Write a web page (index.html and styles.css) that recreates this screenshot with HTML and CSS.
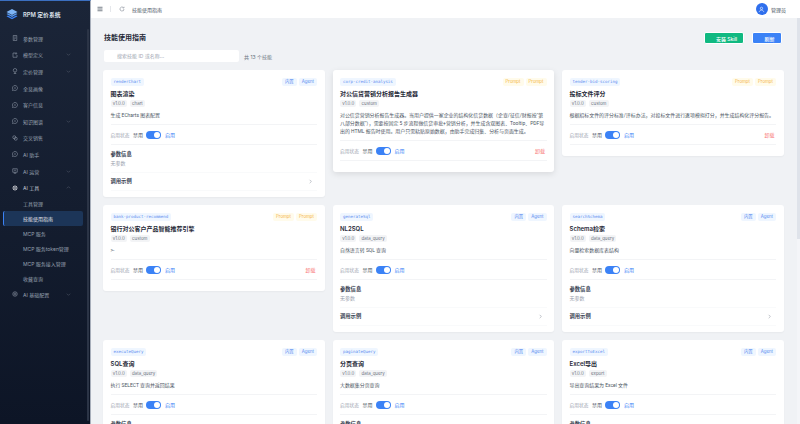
FILE: index.html
```html
<!DOCTYPE html>
<html lang="zh">
<head>
<meta charset="utf-8">
<title>技能使用指南</title>
<link rel="stylesheet" href="styles.css">
</head>
<body>
<div class="app">
  <aside class="sidebar">
    <i class="side-scroll"></i>
    <div class="brand">
      <svg class="logo" viewBox="0 0 24 24"><path d="M12 2 23 8 12 14 1 8Z" fill="#7db4f5"/><path d="M1 12l11 6 11-6-3-1.600-8 4.400-8-4.400Z" fill="#5a9bf0"/><path d="M1 16.500l11 6 11-6-3-1.600-8 4.400-8-4.400Z" fill="#3b82f6"/></svg>
      <span class="brand-name">RPM 定价系统</span>
    </div>
    <nav class="menu">
      <a class="item"><svg class="ic" viewBox="0 0 24 24"><path d="M5 2h14v20H5zM9 8h6M9 13h6M9 17h3"/></svg><span>参数管理</span></a>
      <a class="item"><svg class="ic" viewBox="0 0 24 24"><path d="M12 4H4v17h16v-9M16 3a3 3 0 1 0 .01 0"/></svg><span>模型定义</span><svg class="caret" viewBox="0 0 24 24"><path d="M4 8l8 8 8-8"/></svg></a>
      <a class="item"><svg class="ic" viewBox="0 0 24 24"><circle cx="12" cy="9" r="7"/><path d="M12 16v6M7 22h10"/></svg><span>定价管理</span><svg class="caret" viewBox="0 0 24 24"><path d="M4 8l8 8 8-8"/></svg></a>
      <a class="item"><svg class="ic" viewBox="0 0 24 24"><path d="M12 2a10 10 0 1 1-5 18.700L2 22l1.300-5A10 10 0 0 1 12 2ZM8 12h8"/></svg><span>全息画像</span></a>
      <a class="item"><svg class="ic" viewBox="0 0 24 24"><path d="M12 2a10 10 0 1 1-5 18.700L2 22l1.300-5A10 10 0 0 1 12 2ZM8 12h8"/></svg><span>客户信息</span></a>
      <a class="item"><svg class="ic" viewBox="0 0 24 24"><path d="M12 2a10 10 0 1 1-5 18.700L2 22l1.300-5A10 10 0 0 1 12 2ZM8 12h8"/></svg><span>知识图谱</span><svg class="caret" viewBox="0 0 24 24"><path d="M4 8l8 8 8-8"/></svg></a>
      <a class="item"><svg class="ic" viewBox="0 0 24 24"><circle cx="9" cy="9" r="6"/><circle cx="15" cy="15" r="6"/></svg><span>交叉销售</span></a>
      <a class="item"><svg class="ic" viewBox="0 0 24 24"><path d="M12 2a10 10 0 1 1-5 18.700L2 22l1.300-5A10 10 0 0 1 12 2ZM8 12h8"/></svg><span>AI 助手</span></a>
      <a class="item"><svg class="ic" viewBox="0 0 24 24"><path d="M3 3h18v14H3zM12 17v4M7 21h10M8 9h8"/></svg><span>AI 运营</span><svg class="caret" viewBox="0 0 24 24"><path d="M4 8l8 8 8-8"/></svg></a>
      <a class="item open"><svg class="ic" viewBox="0 0 24 24"><circle cx="12" cy="12" r="5"/><path d="M12 1v5M12 18v5M1 12h5M18 12h5M4 4l4 4M16 16l4 4M20 4l-4 4M8 16l-4 4"/></svg><span>AI 工具</span><svg class="caret" viewBox="0 0 24 24"><path d="M4 16l8-8 8 8"/></svg></a>
      <a class="sub">工具管理</a>
      <a class="sub active">技能使用指南</a>
      <a class="sub">MCP 服务</a>
      <a class="sub">MCP 服务token管理</a>
      <a class="sub">MCP 服务接入管理</a>
      <a class="sub">收藏查询</a>
      <a class="item"><svg class="ic" viewBox="0 0 24 24"><circle cx="12" cy="12" r="4"/><circle cx="12" cy="12" r="9"/></svg><span>AI 基础配置</span><svg class="caret" viewBox="0 0 24 24"><path d="M4 8l8 8 8-8"/></svg></a>
    </nav>
  </aside>
  <div class="content">
    <header class="topbar">
      <svg class="tool menu-btn" viewBox="0 0 24 24"><path d="M2 5h20M2 12h20M2 19h20"/></svg>
      <i class="sep"></i>
      <svg class="tool" viewBox="0 0 24 24"><path d="M20 12a8 8 0 1 1-3-6.200M20 3v5h-5"/></svg>
      <span class="crumb">技能使用指南</span>
      <span class="user"><span class="avatar"><svg viewBox="0 0 24 24"><circle cx="12" cy="8" r="4"/><path d="M4 21c1-5 4-7 8-7s7 2 8 7"/></svg></span><span>管理员</span></span>
    </header>
    <div class="body-row">
      <main class="page">
        <div class="page-head">
          <h1>技能使用指南</h1>
          <div class="actions">
            <button class="btn green">安装 Skill</button>
            <button class="btn blue">刷新</button>
          </div>
        </div>
        <div class="search-row">
          <div class="search">搜索技能 ID 或名称...</div>
          <span class="count">共 13 个技能</span>
        </div>
        <div class="grid">
          <section class="card">
            <div class="card-top"><code class="id">renderChart</code><span class="badges"><b>内置</b><b>Agent</b></span></div>
            <h2>图表渲染</h2>
            <div class="meta"><em>v1.0.0</em><em>chart</em></div>
            <p class="desc">生成 ECharts 图表配置</p>
            <div class="state"><span class="lab">启用状态</span><span class="off">禁用</span><i class="switch"></i><span class="on">启用</span></div>
            <div class="params"><h3>参数信息</h3><p>无参数</p></div>
            <div class="example"><h3>调用示例</h3><svg viewBox="0 0 24 24"><path d="M8 4l8 8-8 8"/></svg></div>
          </section>
          <section class="card lifted">
            <div class="card-top"><code class="id">corp-credit-analysis</code><span class="badges prompt"><b>Prompt</b><b>Prompt</b></span></div>
            <h2>对公信贷营销分析报告生成器</h2>
            <div class="meta"><em>v1.0.0</em><em>custom</em></div>
            <p class="desc">对公信贷营销分析报告生成器。当用户提供一家企业的结构化信贷数据（企查/征信/财报按"第八部分数据"），需要按固定 5 步流程做信贷审批+营销分析，并生成含双图表、Tooltip、PDF导出的 HTML 报告时使用。用户只需粘贴原始数据，由助手完成归集、分析与页面生成。</p>
            <div class="state last"><span class="lab">启用状态</span><span class="off">禁用</span><i class="switch"></i><span class="on">启用</span><a class="del">卸载</a></div>
          </section>
          <section class="card">
            <div class="card-top"><code class="id">tender-bid-scoring</code><span class="badges prompt"><b>Prompt</b><b>Prompt</b></span></div>
            <h2>投标文件评分</h2>
            <div class="meta"><em>v1.0.0</em><em>custom</em></div>
            <p class="desc">根据招标文件的评分标准/评标办法，对投标文件进行逐项模拟打分，并生成结构化评分报告。</p>
            <div class="state last"><span class="lab">启用状态</span><span class="off">禁用</span><i class="switch"></i><span class="on">启用</span><a class="del">卸载</a></div>
          </section>
          <section class="card">
            <div class="card-top"><code class="id">bank-product-recommend</code><span class="badges prompt"><b>Prompt</b><b>Prompt</b></span></div>
            <h2>银行对公客户产品智能推荐引擎</h2>
            <div class="meta"><em>v1.0.0</em><em>custom</em></div>
            <p class="desc">&gt;-</p>
            <div class="state last"><span class="lab">启用状态</span><span class="off">禁用</span><i class="switch"></i><span class="on">启用</span><a class="del">卸载</a></div>
          </section>
          <section class="card">
            <div class="card-top"><code class="id">generateSql</code><span class="badges"><b>内置</b><b>Agent</b></span></div>
            <h2>NL2SQL</h2>
            <div class="meta"><em>v1.0.0</em><em>data_query</em></div>
            <p class="desc">自然语言转 SQL 查询</p>
            <div class="state"><span class="lab">启用状态</span><span class="off">禁用</span><i class="switch"></i><span class="on">启用</span></div>
            <div class="params"><h3>参数信息</h3><p>无参数</p></div>
            <div class="example"><h3>调用示例</h3><svg viewBox="0 0 24 24"><path d="M8 4l8 8-8 8"/></svg></div>
          </section>
          <section class="card">
            <div class="card-top"><code class="id">searchSchema</code><span class="badges"><b>内置</b><b>Agent</b></span></div>
            <h2>Schema检索</h2>
            <div class="meta"><em>v1.0.0</em><em>data_query</em></div>
            <p class="desc">向量检索数据库表结构</p>
            <div class="state"><span class="lab">启用状态</span><span class="off">禁用</span><i class="switch"></i><span class="on">启用</span></div>
            <div class="params"><h3>参数信息</h3><p>无参数</p></div>
            <div class="example"><h3>调用示例</h3><svg viewBox="0 0 24 24"><path d="M8 4l8 8-8 8"/></svg></div>
          </section>
          <section class="card">
            <div class="card-top"><code class="id">executeQuery</code><span class="badges"><b>内置</b><b>Agent</b></span></div>
            <h2>SQL查询</h2>
            <div class="meta"><em>v1.0.0</em><em>data_query</em></div>
            <p class="desc">执行 SELECT 查询并返回结果</p>
            <div class="state"><span class="lab">启用状态</span><span class="off">禁用</span><i class="switch"></i><span class="on">启用</span></div>
            <div class="params"><h3>参数信息</h3><p>无参数</p></div>
          </section>
          <section class="card">
            <div class="card-top"><code class="id">paginateQuery</code><span class="badges"><b>内置</b><b>Agent</b></span></div>
            <h2>分页查询</h2>
            <div class="meta"><em>v1.0.0</em><em>data_query</em></div>
            <p class="desc">大数据集分页查询</p>
            <div class="state"><span class="lab">启用状态</span><span class="off">禁用</span><i class="switch"></i><span class="on">启用</span></div>
            <div class="params"><h3>参数信息</h3><p>无参数</p></div>
          </section>
          <section class="card">
            <div class="card-top"><code class="id">exportToExcel</code><span class="badges"><b>内置</b><b>Agent</b></span></div>
            <h2>Excel导出</h2>
            <div class="meta"><em>v1.0.0</em><em>export</em></div>
            <p class="desc">导出查询结果为 Excel 文件</p>
            <div class="state"><span class="lab">启用状态</span><span class="off">禁用</span><i class="switch"></i><span class="on">启用</span></div>
            <div class="params"><h3>参数信息</h3><p>无参数</p></div>
          </section>
        </div>
      </main>
      <div class="scrollbar"><i class="thumb"></i></div>
    </div>
  </div>
</div>
</body>
</html>
```
FILE: styles.css
```css
* { box-sizing: border-box; }
html, body { margin: 0; height: 100%; overflow: hidden; }
body { font-family: Inter, "Noto Sans CJK SC", sans-serif; font-size: 5px; color: #374151; background: #f0f2f5; }
.app { display: flex; height: 424px; }

.sidebar { position: relative; width: 91px; flex: none; background: linear-gradient(180deg, #1b2538 0%, #0d1526 100%); border-right: 1px solid #a8afbb; border-top: 1px solid #3b6fc0; }
.side-scroll { position: absolute; right: 1px; top: 28px; bottom: 3px; width: 2px; background: #2b3446; border-radius: 1px; }
.brand { height: 26px; display: flex; align-items: center; gap: 5px; padding-left: 6px; }
.logo { width: 12px; height: 12px; }
.brand-name { color: #dde2ea; font-size: 5.800px; font-weight: 600; }
.menu { display: flex; flex-direction: column; padding: 3px 7px 0 3px; }
.item { height: 16.600px; flex: none; display: flex; align-items: center; gap: 5px; padding-left: 9px; color: #98a1b0; }
.item.open { color: #c9ced8; }
.item span { flex: 1; }
.ic { width: 6px; height: 6px; fill: none; stroke: #98a1b0; stroke-width: 2.200; }
.open .ic { stroke: #e5e7eb; stroke-width: 3; }
.caret { width: 5px; height: 5px; margin-right: 12px; fill: none; stroke: #6b7280; stroke-width: 2; }
.sub { height: 15px; flex: none; display: flex; align-items: center; padding-left: 20px; color: #98a1b0; }
.sub.active { color: #e5e7eb; background: #1c3558; border-radius: 2px; border-left: 1px solid #3b82f6; padding-left: 19px; }

.content { flex: 1; min-width: 0; display: flex; flex-direction: column; }
.topbar { height: 18px; flex: none; background: #fff; display: flex; align-items: center; padding: 0 14px 0 6px; color: #4b5563; }
.tool { width: 6px; height: 6px; fill: none; stroke: #6b7280; stroke-width: 2; }
.menu-btn { stroke: #4b5563; stroke-width: 3; }
.sep { width: 1px; height: 6px; background: #e5e7eb; margin: 0 8px 0 7px; }
.crumb { margin-left: 7px; }
.user { margin-left: auto; display: flex; align-items: center; gap: 3px; }
.avatar { width: 12px; height: 12px; border-radius: 50%; background: #2f6fed; display: flex; align-items: center; justify-content: center; }
.avatar svg { width: 7px; height: 7px; fill: none; stroke: #fff; stroke-width: 2; }

.body-row { flex: 1; min-height: 0; display: flex; }
.page { flex: 1; min-width: 0; overflow: hidden; padding: 14px 14.500px 0 12px; }
.scrollbar { width: 3.500px; flex: none; background: #f4f5f8; }
.thumb { display: block; height: 221px; background: #dfe3ea; }
.page-head { display: flex; justify-content: space-between; align-items: flex-start; height: 18px; padding-left: 1px; }
h1 { margin: 0; padding-top: 1px; font-size: 7px; line-height: 10px; font-weight: 600; color: #1f2937; }
.actions { display: flex; gap: 8px; }
.btn { height: 12px; border: 1px solid #fff; border-radius: 2px; color: #fff; font: 500 5px Inter, "Noto Sans CJK SC", sans-serif; padding: 0 0 0 5px; }
.green { width: 40px; background: #10b981; }
.blue { width: 30px; background: #3b82f6; }
.search-row { display: flex; align-items: center; gap: 5px; height: 12px; margin-bottom: 8px; padding-left: 1px; }
.search { width: 135px; height: 12px; background: #fff; border-radius: 2px; padding-left: 13px; line-height: 12px; color: #9ca3af; }
.count { color: #6b7280; }
.grid { display: grid; grid-template-columns: repeat(3, 221.500px); column-gap: 8px; row-gap: 8px; align-items: start; }
.card { background: #fff; border-radius: 3px; padding: 8px 7.500px 6px; box-shadow: 0 1px 2px rgba(0, 0, 0, .04); }
.lifted { box-shadow: 0 2px 6px rgba(0, 0, 0, .1); }
.card-top { display: flex; justify-content: space-between; align-items: center; height: 8px; }
.id { font: 4.150px "DejaVu Sans Mono", monospace; color: #5b8def; background: #eff6ff; padding: 0 3px; height: 8px; line-height: 8px; border-radius: 2px; }
.badges { display: flex; gap: 2px; }
.badges b { font-weight: 400; font-size: 4.400px; height: 8px; line-height: 8px; padding: 0 3px; color: #5b8def; background: #eff6ff; border-radius: 2px; }
.prompt b { color: #f5b544; background: #fffbeb; }
h2 { margin: 3px 0 0; font-size: 6px; line-height: 9px; font-weight: 600; color: #1f2937; }
.meta { display: flex; gap: 3px; margin-top: 2px; height: 7px; }
.meta em { font-style: normal; font-size: 4.400px; line-height: 7px; padding: 0 2.200px; color: #6b7280; background: #f3f4f6; border-radius: 2px; }
.desc { margin: 4px 0 0; font-family: Roboto, "Noto Sans CJK SC", sans-serif; font-size: 4.950px; line-height: 8px; color: #4b5563; padding-bottom: 5px; border-bottom: 1px solid #f3f4f6; }
.state { height: 20px; display: flex; align-items: center; gap: 3.500px; border-bottom: 1px solid #f3f4f6; }
.state.last { margin-bottom: 5px; }
.lab { color: #9ca3af; font-size: 4.730px; }
.off { color: #4b5563; }
.on { color: #3b82f6; }
.switch { width: 15px; height: 8px; border-radius: 4px; background: #3b82f6; position: relative; }
.switch::after { content: ""; position: absolute; right: 1px; top: 1px; width: 6px; height: 6px; border-radius: 50%; background: #fff; }
.del { margin-left: auto; margin-right: 1.500px; color: #f87171; }
.params { padding-top: 6px; height: 28px; border-bottom: 1px solid #f9fafb; }
h3 { margin: 0; font-size: 5.300px; line-height: 7px; font-weight: 600; color: #374151; }
.params p { margin: 2px 0 0; color: #9ca3af; line-height: 7px; }
.example { height: 18px; display: flex; justify-content: space-between; align-items: center; border-bottom: 1px solid #f9fafb; padding-right: 4px; }
.example svg { width: 5px; height: 5px; fill: none; stroke: #6b7280; stroke-width: 2; }
```
